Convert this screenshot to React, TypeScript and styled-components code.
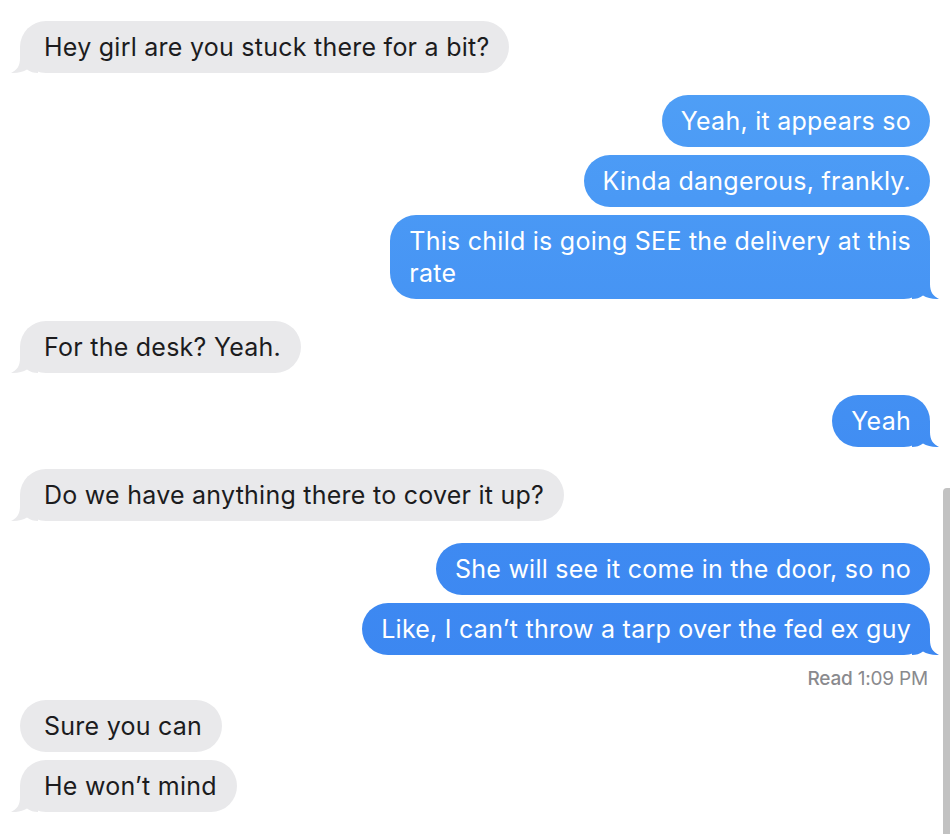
import styled, { createGlobalStyle, css } from 'styled-components'

type Side = 'me' | 'them'

type Message = {
	id: number
	lines: Array<string>
	tail?: boolean
}

type Group = {
	id: number
	from: Side
	messages: Array<Message>
	read?: string
}

const THREAD: Array<Group> = [
	{ id: 1, from: 'them', messages: [{ id: 1, lines: ['Hey girl are you stuck there for a bit?'], tail: true }] },
	{
		id: 2,
		from: 'me',
		messages: [
			{ id: 2, lines: ['Yeah, it appears so'] },
			{ id: 3, lines: ['Kinda dangerous, frankly.'] },
			{ id: 4, lines: ['This child is going SEE the delivery at this', 'rate'], tail: true },
		],
	},
	{ id: 3, from: 'them', messages: [{ id: 5, lines: ['For the desk? Yeah.'], tail: true }] },
	{ id: 4, from: 'me', messages: [{ id: 6, lines: ['Yeah'], tail: true }] },
	{ id: 5, from: 'them', messages: [{ id: 7, lines: ['Do we have anything there to cover it up?'], tail: true }] },
	{
		id: 6,
		from: 'me',
		messages: [
			{ id: 8, lines: ['She will see it come in the door, so no'] },
			{ id: 9, lines: ['Like, I can\u2019t throw a tarp over the fed ex guy'], tail: true },
		],
		read: '1:09 PM',
	},
	{
		id: 7,
		from: 'them',
		messages: [
			{ id: 10, lines: ['Sure you can'] },
			{ id: 11, lines: ['He won\u2019t mind'], tail: true },
		],
	},
]

export default function App() {
	return (
		<>
			<GlobalStyle />
			<Thread>
				{THREAD.map(group => (
					<Cluster key={group.id} $from={group.from}>
						{group.messages.map(msg => (
							<Bubble key={msg.id} $from={group.from} $tail={!!msg.tail}>
								{msg.lines.map((line, i) => (
									<span key={i}>
										{i > 0 && <br />}
										{line}
									</span>
								))}
							</Bubble>
						))}
						{group.read && (
							<Receipt>
								<b>Read</b> {group.read}
							</Receipt>
						)}
					</Cluster>
				))}
			</Thread>
			<Scrollbar />
		</>
	)
}

let GlobalStyle = createGlobalStyle`
	html, body {
		margin: 0;
		background: #ffffff;
		overflow: hidden;
	}
	body {
		font-family: Inter, "Liberation Sans", sans-serif;
		-webkit-font-smoothing: antialiased;
	}
`

let BLUE = css`
	background: linear-gradient(180deg, #53a3f7 0px, #4a99f5 200px, #3f8bf2 500px, #3983f0 834px) fixed;
`

let Thread = styled.main`
	display: flex;
	flex-direction: column;
	gap: 22px;
	padding: 21px 20px 0 20px;
`

let Cluster = styled.section<{ $from: Side }>`
	display: flex;
	flex-direction: column;
	gap: 8px;
	align-items: ${p => (p.$from === 'me' ? 'flex-end' : 'flex-start')};
`

let tailPath = `path('M0 0 H18 V11 C18 19 21 23 27 26 C21 26.5 15 25 11 22.5 C8 25 4 26 0 26 Z')`
let tailPathLeft = `path('M30 0 H12 V11 C12 19 9 23 3 26 C9 26.5 15 25 19 22.5 C22 25 26 26 30 26 Z')`

let Bubble = styled.div<{ $from: Side; $tail: boolean }>`
	position: relative;
	box-sizing: border-box;
	white-space: nowrap;
	border-radius: 26px;
	font-size: 25px;
	line-height: 32px;
	letter-spacing: 0.25px;
	${p =>
		p.$from === 'me'
			? css`
					${BLUE};
					padding: 10px 19px;
					color: #ffffff;
				`
			: css`
					background: #e9e9eb;
					padding: 10px 20px 10px 24px;
					color: #1c1c1e;
				`}

	${p =>
		p.$tail &&
		(p.$from === 'me'
			? css`
					&::after {
						content: '';
						position: absolute;
						right: -12px;
						bottom: 0;
						width: 30px;
						height: 26px;
						${BLUE};
						clip-path: ${tailPath};
					}
				`
			: css`
					&::after {
						content: '';
						position: absolute;
						left: -12px;
						bottom: 0;
						width: 30px;
						height: 26px;
						background: #e9e9eb;
						clip-path: ${tailPathLeft};
					}
				`)}
`

let Receipt = styled.div`
	margin: 4px 2px -13px 0;
	font-size: 19px;
	line-height: 24px;
	color: #8a8a8e;
	letter-spacing: -0.2px;

	b {
		font-weight: 500;
	}
`

let Scrollbar = styled.div`
	position: fixed;
	top: 488px;
	right: 0;
	bottom: 0;
	width: 7px;
	background: #c2c2c2;
	border-radius: 4px 0 0 0;
`
